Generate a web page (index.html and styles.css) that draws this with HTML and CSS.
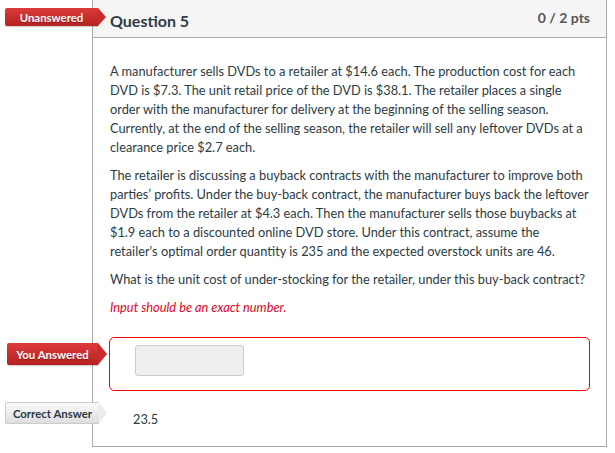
FILE: index.html
```html
<!DOCTYPE html>
<html>
<head>
<meta charset="utf-8">
<link rel="stylesheet" href="styles.css">
</head>
<body>
<div class="page">
  <div class="card">
    <div class="header">
      <span class="badge badge-red badge-unanswered">Unanswered</span>
      <h2 class="title">Question 5</h2>
      <div class="pts">0 / 2 pts</div>
    </div>
    <div class="body">
      <p>A manufacturer sells DVDs to a retailer at $14.6 each. The production cost for each DVD is $7.3. The unit retail price of the DVD is $38.1. The retailer places a single order with the manufacturer for delivery at the beginning of the selling season. Currently, at the end of the selling season, the retailer will sell any leftover DVDs at a clearance price $2.7 each.</p>
      <p>The retailer is discussing a buyback contracts with the manufacturer to improve both parties’ profits. Under the buy-back contract, the manufacturer buys back the leftover DVDs from the retailer at $4.3 each. Then the manufacturer sells those buybacks at $1.9 each to a discounted online DVD store. Under this contract, assume the retailer's optimal order quantity is 235 and the expected overstock units are 46.</p>
      <p>What is the unit cost of under-stocking for the retailer, under this buy-back contract?</p>
      <p class="hint">Input should be an exact number.</p>
    </div>
    <div class="answer">
      <span class="badge badge-red badge-you">You Answered</span>
      <div class="answer-box"><div class="input"></div></div>
    </div>
    <div class="correct">
      <span class="badge badge-gray badge-correct">Correct Answer</span>
      <span class="correct-value">23.5</span>
    </div>
  </div>
</div>
</body>
</html>
```

FILE: styles.css
```css
html, body {
  margin: 0;
  padding: 0;
  background: #fff;
}
body {
  font-family: Lato, "Open Sans", sans-serif;
  color: #2d3b45;
}
.page {
  padding-left: 92px;
  width: 515px;
}
.card {
  position: relative;
  border: 1px solid #aaa;
  border-top: none;
  height: 447px;
  box-sizing: border-box;
}
.header {
  position: relative;
  display: flex;
  align-items: center;
  justify-content: space-between;
  background: #f5f5f5;
  border-bottom: 1px solid #aaa;
  height: 38px;
  box-sizing: border-box;
  padding: 0 16px 0 17px;
}
.title {
  margin: 0;
  font-size: 16px;
  font-weight: 700;
  color: #2d3b45;
  padding-top: 3px;
}
.pts {
  font-size: 14px;
  font-weight: 700;
  color: #555;
  padding-bottom: 2px;
}
.body {
  padding: 24px 17px 0 17px;
  font-size: 12.8px;
  line-height: 19px;
}
.body p {
  margin: 0 0 9px;
}
.hint {
  color: #e0061f;
  font-style: italic;
}
.answer {
  position: relative;
  padding: 11px 16px 0 16px;
}
.answer-box {
  border: 1px solid #f00;
  border-radius: 5px;
  height: 54px;
  box-sizing: border-box;
  padding: 7px 0 0 25px;
}
.input {
  width: 109px;
  height: 31px;
  box-sizing: border-box;
  background: #eee;
  border: 1px solid #ccc;
  border-radius: 3px;
}
.correct {
  position: relative;
  padding: 19px 0 0 40px;
  font-size: 12.8px;
  line-height: 19px;
}
.badge {
  position: absolute;
  font-family: Lato, "Open Sans", sans-serif;
  font-size: 11.4px;
  font-weight: 700;
  display: flex;
  align-items: center;
  justify-content: center;
  box-sizing: border-box;
  border-radius: 2px 0 0 2px;
}
.badge::after {
  content: "";
  position: absolute;
  top: 0;
  right: -8px;
  width: 0;
  height: 0;
  border-style: solid;
}
.badge-red {
  color: #fff;
  background: linear-gradient(#dd3b3b, #b62121);
  text-shadow: 0 1px 0 rgba(0,0,0,0.3);
  box-shadow: 0 1px 1px rgba(0,0,0,0.2);
}
.badge-unanswered {
  left: -88px;
  top: 8px;
  width: 93px;
  height: 18px;
}
.badge-unanswered::after {
  border-width: 9px 0 9px 8px;
  border-color: transparent transparent transparent #c82d2d;
}
.badge-you {
  left: -86px;
  top: 17px;
  width: 91px;
  height: 22px;
}
.badge-you::after {
  right: -9px;
  border-width: 11px 0 11px 9px;
  border-color: transparent transparent transparent #c82d2d;
}
.badge-gray {
  color: #2d3b45;
  background: linear-gradient(#fafafa, #dedede);
  border: 1px solid #ccc;
  border-right: none;
}
.badge-correct {
  left: -88px;
  top: 11px;
  width: 94px;
  height: 22px;
}
.badge-correct::after {
  top: 0;
  right: -8px;
  border-width: 10px 0 10px 8px;
  border-color: transparent transparent transparent #ececec;
}
.correct-value {
  color: #2d3b45;
}
```
